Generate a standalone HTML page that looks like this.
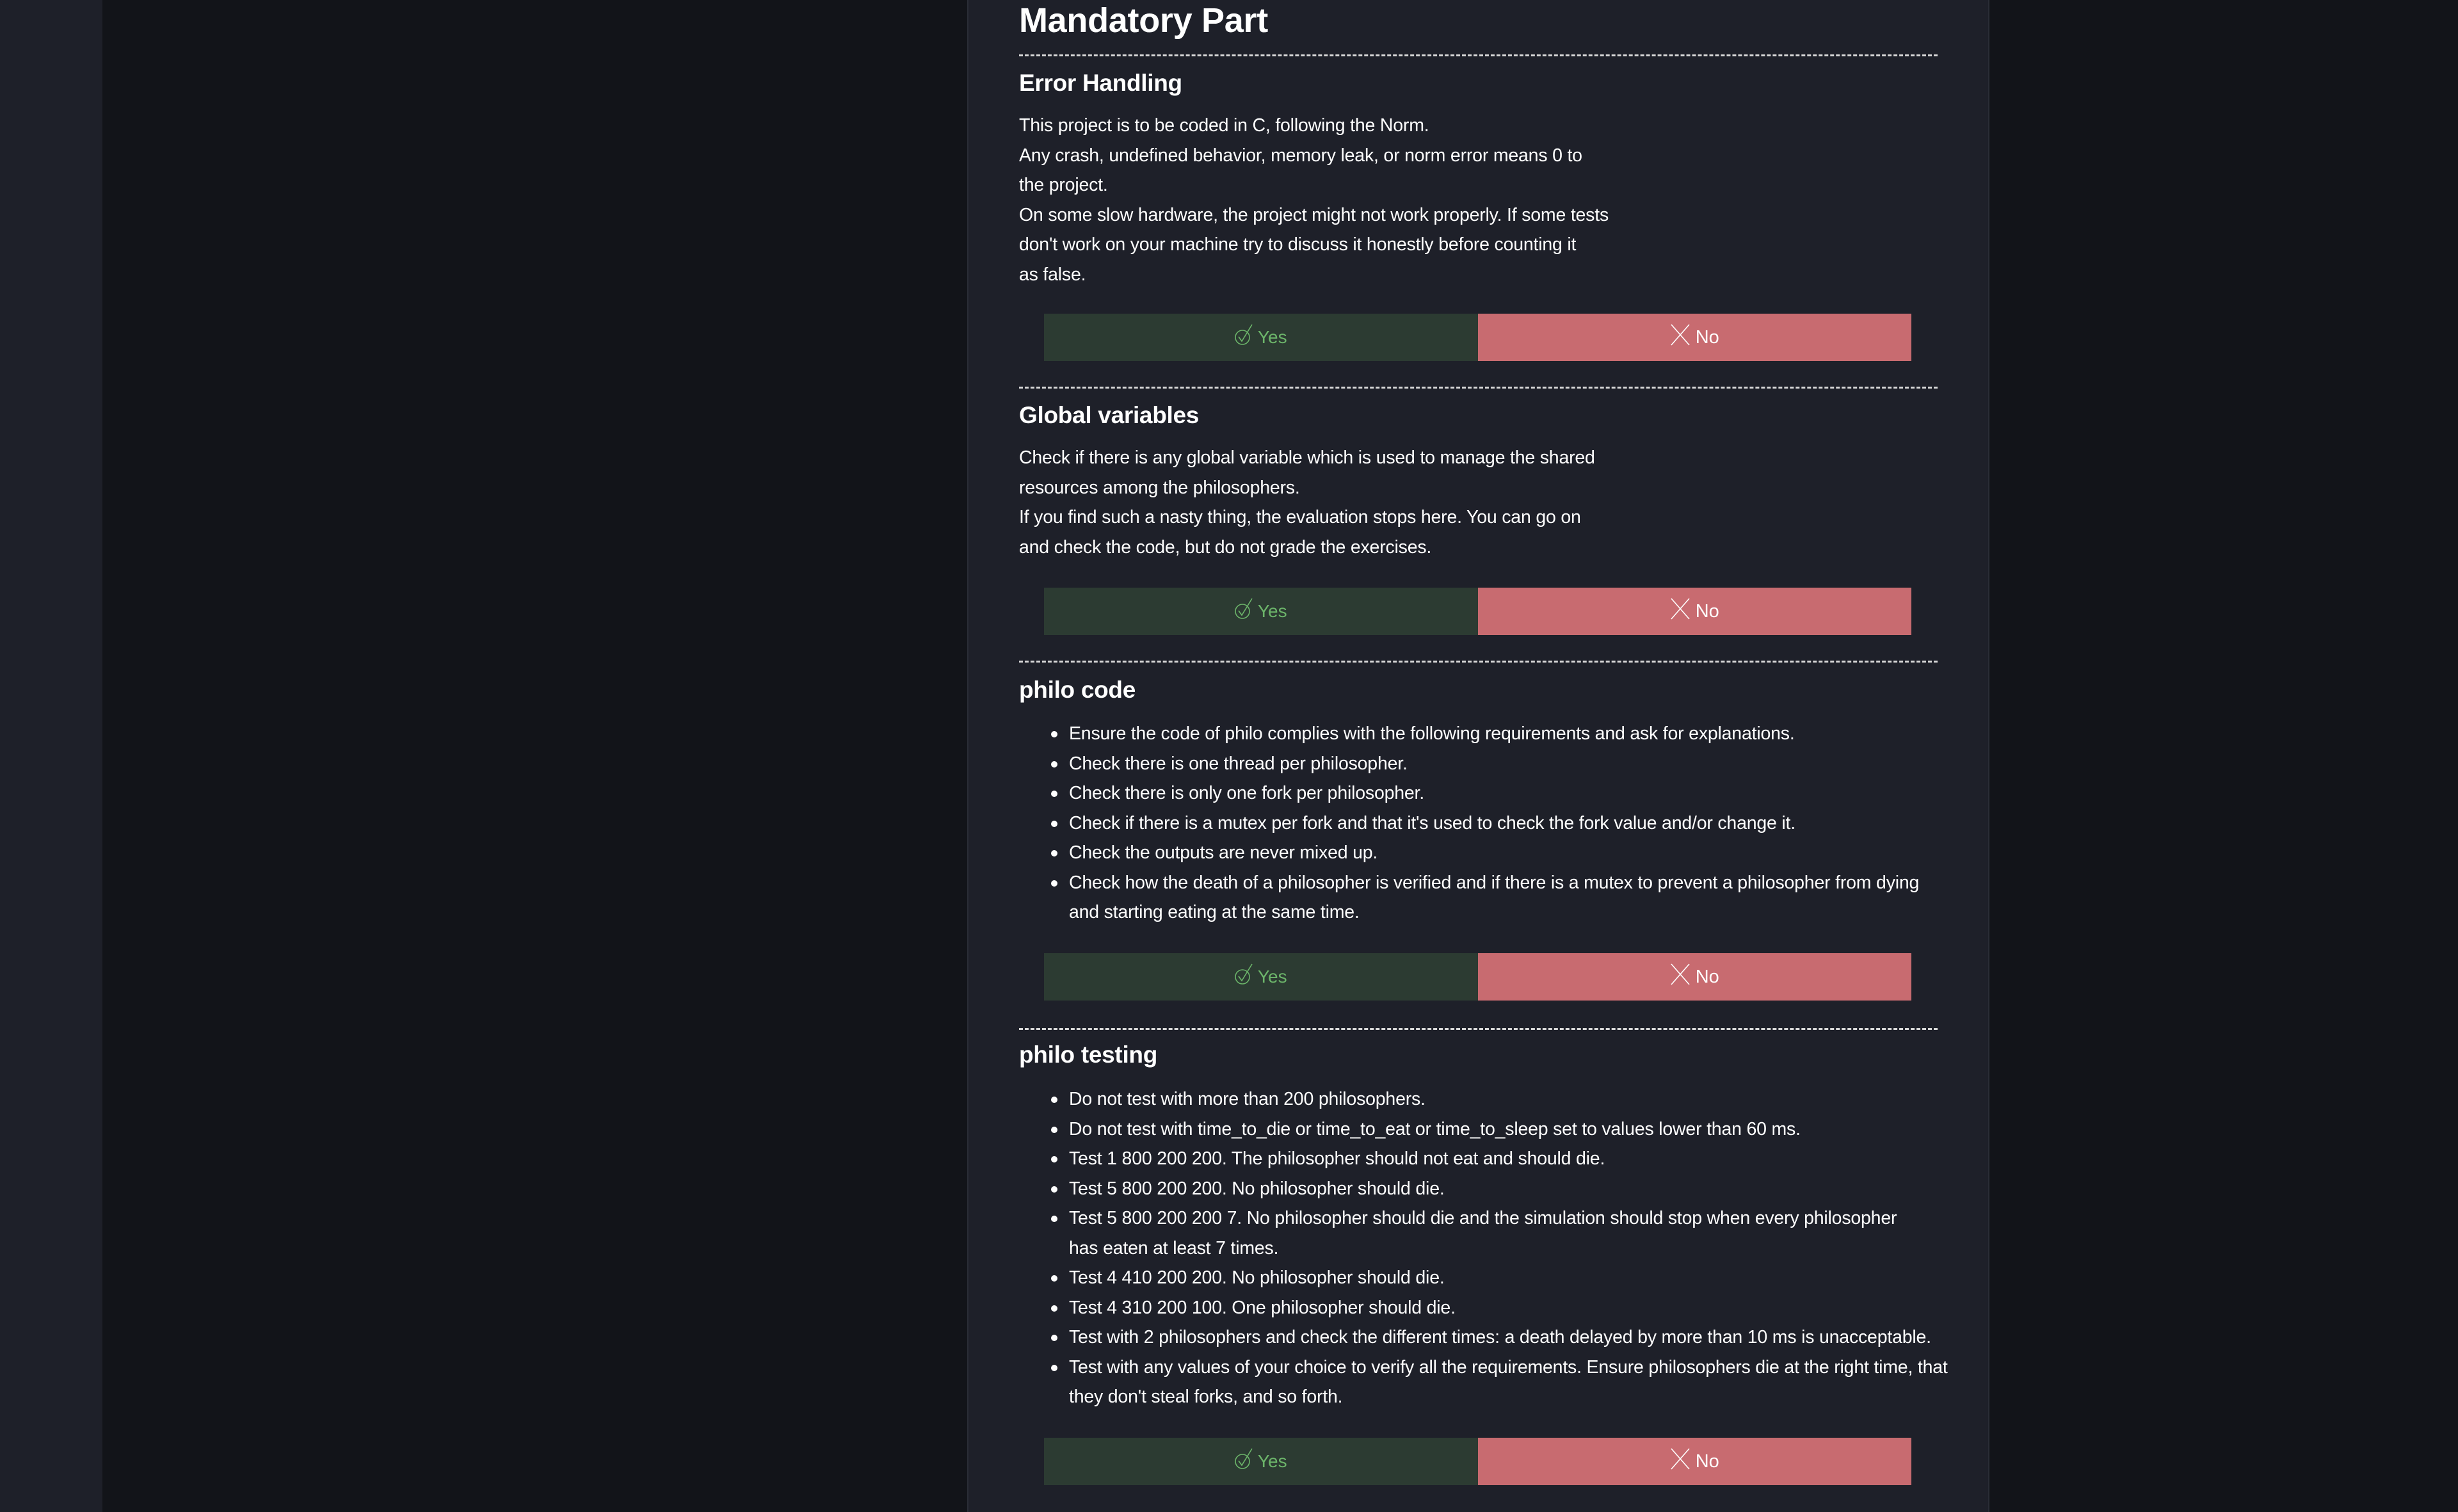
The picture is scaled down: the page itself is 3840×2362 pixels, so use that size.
<!DOCTYPE html>
<html><head><meta charset="utf-8"><style>
*{margin:0;padding:0;box-sizing:border-box}
html,body{width:3840px;height:2362px;overflow:hidden;background:#121419;font-family:"Liberation Sans",sans-serif;color:#fff}
.strip{position:absolute;left:0;top:0;width:160px;height:2362px;background:#1e2029}
.panel{position:absolute;left:1511px;top:0;width:1597px;height:2362px;background:#1e2029;border-left:2px solid #2a2d36;border-right:2px solid #2a2d36}
.t{position:absolute;left:1592px;white-space:nowrap}
.h1{font-size:54px;font-weight:bold;letter-spacing:-0.3px;line-height:64px}
.h2{font-size:37px;font-weight:bold;letter-spacing:-0.3px;line-height:46px}
.p{font-size:28.5px;line-height:46.5px;letter-spacing:-0.2px}
.dash{position:absolute;left:1592px;width:1435px;height:0;border-top:3px dashed #d8d8d8}
ul{list-style:none}
ul li{position:relative;padding-left:78px}
ul li:before{content:"";position:absolute;left:50px;top:19px;width:10px;height:10px;border-radius:50%;background:#fff}
.btn{position:absolute;left:1631px;width:1355px;height:74px;display:flex}
.y{flex:1;background:#2c3b32;color:#6cb56a;display:flex;align-items:center;justify-content:center;font-size:28px}
.n{flex:1;background:#c86b70;color:#fff;display:flex;align-items:center;justify-content:center;font-size:29px}
.y svg,.n svg{margin-right:8px;margin-top:-8px}
</style></head><body>
<div class="strip"></div>
<div class="panel"></div>

<div class="t h1" style="top:0px">Mandatory Part</div>
<div class="dash" style="top:85px"></div>

<div class="t h2" style="top:107px">Error Handling</div>
<div class="t p" style="top:173px">This project is to be coded in C, following the Norm.<br>Any crash, undefined behavior, memory leak, or norm error means 0 to<br>the project.<br>On some slow hardware, the project might not work properly. If some tests<br>don't work on your machine try to discuss it honestly before counting it<br>as false.</div>
<div class="btn" style="top:490px"><div class="y"><svg width="28" height="34" viewBox="0 0 28 34"><circle cx="12" cy="21" r="11" fill="none" stroke="#6cb56a" stroke-width="1.6"/><path d="M6 20 L11 27 L27 1" fill="none" stroke="#6cb56a" stroke-width="1.6"/></svg>Yes</div><div class="n"><svg width="32" height="34" viewBox="0 0 32 34"><path d="M2 1 L30 33 M30 1 L2 33" stroke="#fff" stroke-width="1.6"/></svg>No</div></div>
<div class="dash" style="top:604px"></div>

<div class="t h2" style="top:626px">Global variables</div>
<div class="t p" style="top:692px">Check if there is any global variable which is used to manage the shared<br>resources among the philosophers.<br>If you find such a nasty thing, the evaluation stops here. You can go on<br>and check the code, but do not grade the exercises.</div>
<div class="btn" style="top:918px"><div class="y"><svg width="28" height="34" viewBox="0 0 28 34"><circle cx="12" cy="21" r="11" fill="none" stroke="#6cb56a" stroke-width="1.6"/><path d="M6 20 L11 27 L27 1" fill="none" stroke="#6cb56a" stroke-width="1.6"/></svg>Yes</div><div class="n"><svg width="32" height="34" viewBox="0 0 32 34"><path d="M2 1 L30 33 M30 1 L2 33" stroke="#fff" stroke-width="1.6"/></svg>No</div></div>
<div class="dash" style="top:1032px"></div>

<div class="t h2" style="top:1055px">philo code</div>
<ul class="t p" style="top:1123px">
<li>Ensure the code of philo complies with the following requirements and ask for explanations.</li>
<li>Check there is one thread per philosopher.</li>
<li>Check there is only one fork per philosopher.</li>
<li>Check if there is a mutex per fork and that it's used to check the fork value and/or change it.</li>
<li>Check the outputs are never mixed up.</li>
<li>Check how the death of a philosopher is verified and if there is a mutex to prevent a philosopher from dying<br>and starting eating at the same time.</li>
</ul>
<div class="btn" style="top:1489px"><div class="y"><svg width="28" height="34" viewBox="0 0 28 34"><circle cx="12" cy="21" r="11" fill="none" stroke="#6cb56a" stroke-width="1.6"/><path d="M6 20 L11 27 L27 1" fill="none" stroke="#6cb56a" stroke-width="1.6"/></svg>Yes</div><div class="n"><svg width="32" height="34" viewBox="0 0 32 34"><path d="M2 1 L30 33 M30 1 L2 33" stroke="#fff" stroke-width="1.6"/></svg>No</div></div>
<div class="dash" style="top:1606px"></div>

<div class="t h2" style="top:1625px">philo testing</div>
<ul class="t p" style="top:1694px">
<li>Do not test with more than 200 philosophers.</li>
<li>Do not test with time_to_die or time_to_eat or time_to_sleep set to values lower than 60 ms.</li>
<li>Test 1 800 200 200. The philosopher should not eat and should die.</li>
<li>Test 5 800 200 200. No philosopher should die.</li>
<li>Test 5 800 200 200 7. No philosopher should die and the simulation should stop when every philosopher<br>has eaten at least 7 times.</li>
<li>Test 4 410 200 200. No philosopher should die.</li>
<li>Test 4 310 200 100. One philosopher should die.</li>
<li>Test with 2 philosophers and check the different times: a death delayed by more than 10 ms is unacceptable.</li>
<li>Test with any values of your choice to verify all the requirements. Ensure philosophers die at the right time, that<br>they don't steal forks, and so forth.</li>
</ul>
<div class="btn" style="top:2246px"><div class="y"><svg width="28" height="34" viewBox="0 0 28 34"><circle cx="12" cy="21" r="11" fill="none" stroke="#6cb56a" stroke-width="1.6"/><path d="M6 20 L11 27 L27 1" fill="none" stroke="#6cb56a" stroke-width="1.6"/></svg>Yes</div><div class="n"><svg width="32" height="34" viewBox="0 0 32 34"><path d="M2 1 L30 33 M30 1 L2 33" stroke="#fff" stroke-width="1.6"/></svg>No</div></div>
</body></html>
